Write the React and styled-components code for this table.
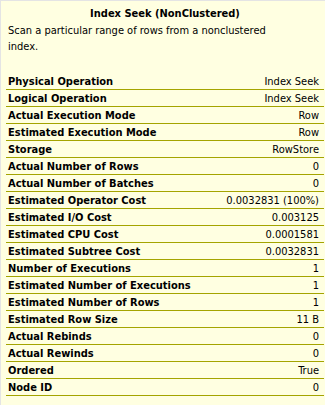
import styled, { createGlobalStyle } from "styled-components";

const GlobalStyle = createGlobalStyle`
  html, body {
    margin: 0;
    padding: 0;
    background: #ffffe1;
  }
`;

const StyledTooltip = styled.div`
  box-sizing: border-box;
  width: 325px;
  height: 405px;
  background-color: #ffffe1;
  border-top: 1px solid #e4e4e4;
  border-left: 1px solid #e4e4e4;
  font-family: "DejaVu Sans Condensed", "DejaVu Sans", sans-serif;
  font-size: 11px;
  color: #000000;
  padding: 5px 1px 0 5px;
`;
const StyledTitle = styled.div`
  font-weight: bold;
  text-align: center;
  line-height: 16px;
`;
const StyledDescription = styled.div`
  margin-top: 1px;
  padding: 0 2px;
  line-height: 16px;
  width: 280px;
`;
const StyledTable = styled.div`
  margin-top: 18px;
  display: flex;
  flex-direction: column;
`;
const StyledRow = styled.div`
  display: flex;
  justify-content: space-between;
  align-items: center;
  height: 16px;
  border-bottom: 1px solid #a4a400;
  padding: 0 5px 0 2px;
`;
const StyledLabel = styled.span`
  font-weight: bold;
`;

const rows = [
  ["Physical Operation", "Index Seek"],
  ["Logical Operation", "Index Seek"],
  ["Actual Execution Mode", "Row"],
  ["Estimated Execution Mode", "Row"],
  ["Storage", "RowStore"],
  ["Actual Number of Rows", "0"],
  ["Actual Number of Batches", "0"],
  ["Estimated Operator Cost", "0.0032831 (100%)"],
  ["Estimated I/O Cost", "0.003125"],
  ["Estimated CPU Cost", "0.0001581"],
  ["Estimated Subtree Cost", "0.0032831"],
  ["Number of Executions", "1"],
  ["Estimated Number of Executions", "1"],
  ["Estimated Number of Rows", "1"],
  ["Estimated Row Size", "11 B"],
  ["Actual Rebinds", "0"],
  ["Actual Rewinds", "0"],
  ["Ordered", "True"],
  ["Node ID", "0"],
];

export default function App() {
  return (
    <>
      <GlobalStyle />
      <StyledTooltip>
        <StyledTitle>Index Seek (NonClustered)</StyledTitle>
        <StyledDescription>
          Scan a particular range of rows from a nonclustered index.
        </StyledDescription>
        <StyledTable>
          {rows.map(([label, value]) => (
            <StyledRow key={label}>
              <StyledLabel>{label}</StyledLabel>
              <span>{value}</span>
            </StyledRow>
          ))}
        </StyledTable>
      </StyledTooltip>
    </>
  );
}
